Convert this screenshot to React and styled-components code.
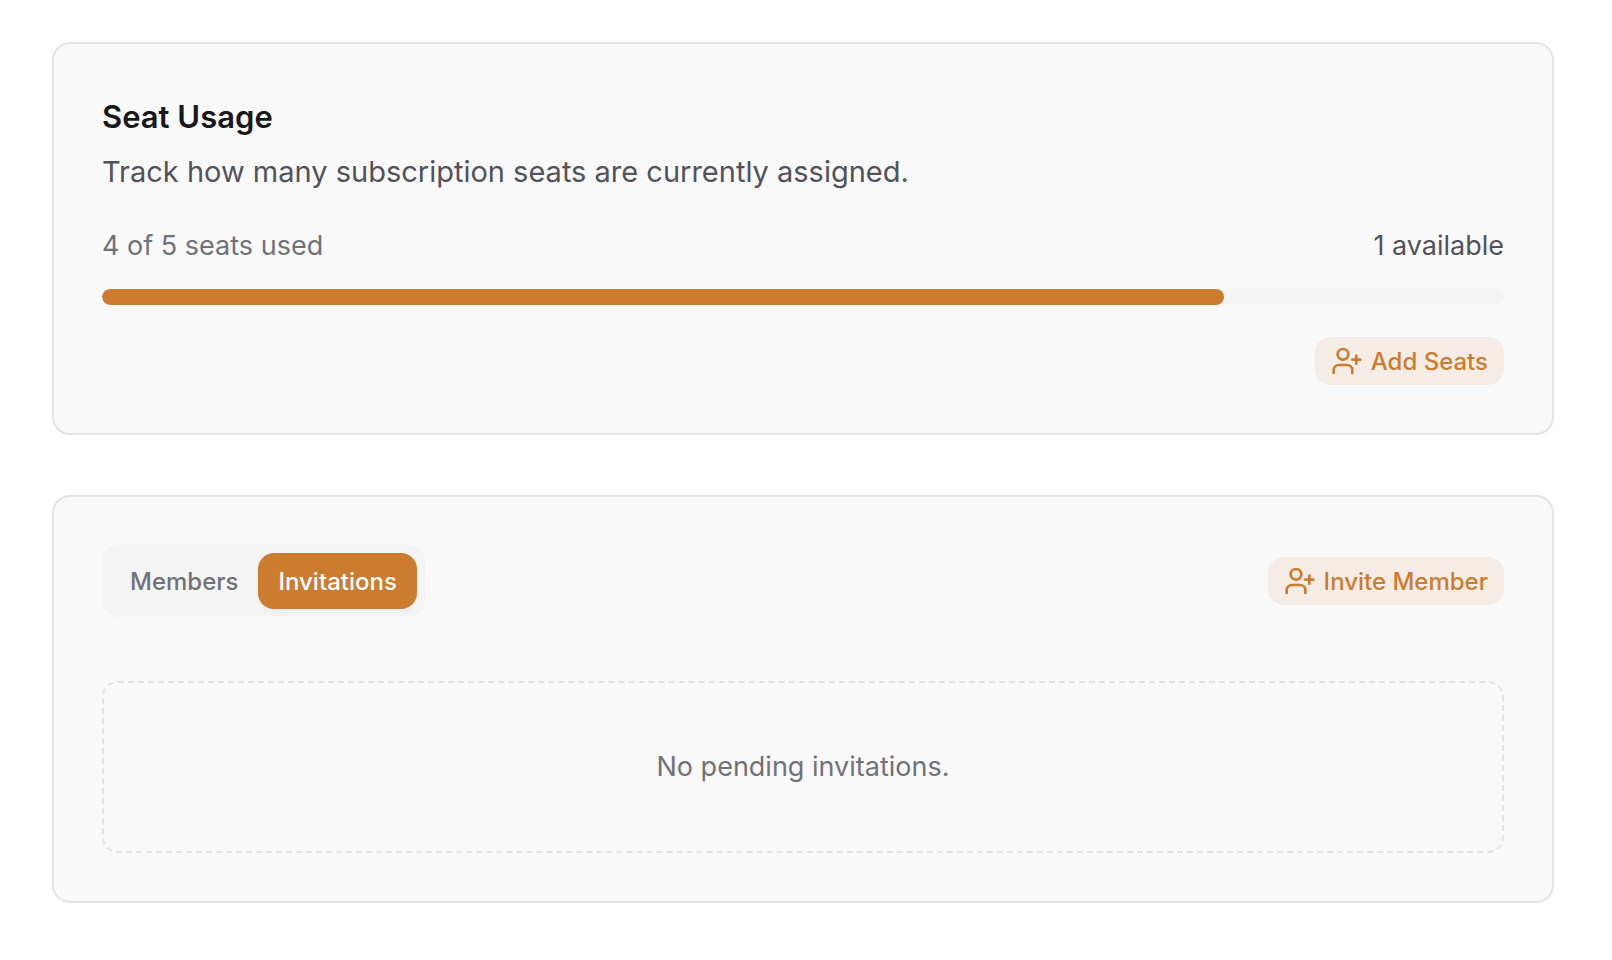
import { useState } from 'react'
import styled, { createGlobalStyle } from 'styled-components'
import { UserPlus } from 'lucide-react'

const TABS = [
	{ id: 'members', label: 'Members' },
	{ id: 'invitations', label: 'Invitations' },
]

const SeatUsage = ({ used = 0, total = 0 }) => {
	return (
		<Card>
			<Title>Seat Usage</Title>
			<Description>
				Track how many subscription seats are currently assigned.
			</Description>
			<UsageRow>
				<span id="seats-used">
					{used} of {total} seats used
				</span>
				<span className="available">{total - used} available</span>
			</UsageRow>
			<Track
				role="progressbar"
				aria-labelledby="seats-used"
				aria-valuemin={0}
				aria-valuemax={total}
				aria-valuenow={used}
			>
				<Fill style={{ width: `${(used / total) * 100}%` }} />
			</Track>
			<Actions>
				<SoftButton type="button">
					<UserPlus size={32} aria-hidden="true" />
					Add Seats
				</SoftButton>
			</Actions>
		</Card>
	)
}

const Team = () => {
	const [tab, setTab] = useState('invitations')

	return (
		<Card>
			<Toolbar>
				<TabList role="tablist">
					{TABS.map(({ id, label }) => (
						<Tab
							key={id}
							type="button"
							role="tab"
							aria-selected={tab === id}
							$active={tab === id}
							onClick={() => setTab(id)}
						>
							{label}
						</Tab>
					))}
				</TabList>
				<SoftButton type="button">
					<UserPlus size={32} aria-hidden="true" />
					Invite Member
				</SoftButton>
			</Toolbar>
			<Empty>
				{tab === 'invitations' ? 'No pending invitations.' : 'No members.'}
			</Empty>
		</Card>
	)
}

const App = () => {
	return (
		<>
			<GlobalStyle />
			<Page>
				<SeatUsage used={4} total={5} />
				<Team />
			</Page>
		</>
	)
}

export default App

// ? styled
const GlobalStyle = createGlobalStyle`
	* {
		box-sizing: border-box;
	}

	body {
		margin: 0;
		background-color: #ffffff;
		font-family: Inter, 'Liberation Sans', sans-serif;
		-webkit-font-smoothing: antialiased;
	}

	button {
		border: none;
		font-family: inherit;
		cursor: pointer;
	}
`

const Page = styled.main`
	display: flex;
	flex-direction: column;
	gap: 60px;
	padding: 42px 58px 56px 52px;
`

const Card = styled.section`
	padding: 48px;
	border: 2px solid #e4e4e4;
	border-radius: 18px;
	background-color: #f9f9f9;
`

const Title = styled.h2`
	margin: 0;
	color: #18181b;
	font-size: 31px;
	font-weight: 600;
	line-height: 50px;
`

const Description = styled.p`
	margin: 6px 0 0;
	color: #52525b;
	font-size: 29px;
	line-height: 48px;
`

const UsageRow = styled.div`
	display: flex;
	justify-content: space-between;
	margin: 30px 0 23px;
	color: #71717a;
	font-size: 27px;
	line-height: 40px;

	.available {
		color: #52525b;
	}
`

const Track = styled.div`
	height: 16px;
	border-radius: 8px;
	background-color: #f4f4f4;
	overflow: hidden;
`

const Fill = styled.div`
	height: 100%;
	border-radius: 8px;
	background-color: #cb7c2f;
`

const Actions = styled.div`
	display: flex;
	justify-content: flex-end;
	margin-top: 32px;
`

const SoftButton = styled.button`
	display: flex;
	align-items: center;
	gap: 8px;
	height: 48px;
	padding: 0 16px;
	border-radius: 16px;
	background-color: #f5ece5;
	color: #cb7c2f;
	font-size: 24px;
	font-weight: 500;
`

const Toolbar = styled.div`
	display: flex;
	justify-content: space-between;
	align-items: center;
`

const TabList = styled.div`
	display: flex;
	padding: 8px;
	border-radius: 16px;
	background-color: #f4f4f4;
`

const Tab = styled.button`
	height: 56px;
	padding: 0 20px;
	border-radius: 16px;
	background-color: ${({ $active }) => ($active ? '#cb7c2f' : 'transparent')};
	box-shadow: ${({ $active }) =>
		$active ? '0 2px 4px rgba(0, 0, 0, 0.05)' : 'none'};
	color: ${({ $active }) => ($active ? '#ffffff' : '#71717a')};
	font-size: 24px;
	font-weight: 500;
`

const Empty = styled.div`
	margin-top: 64px;
	padding: 64px 32px;
	border: 2px dashed #e4e4e4;
	border-radius: 16px;
	color: #71717a;
	font-size: 27px;
	line-height: 40px;
	text-align: center;
`
